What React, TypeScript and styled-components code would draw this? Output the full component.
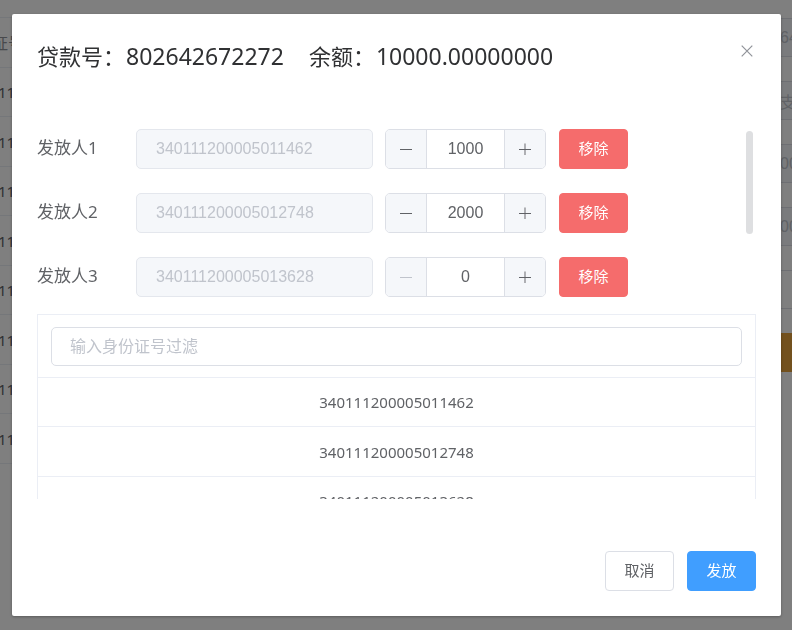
import React, { useState } from 'react';
import styled, { createGlobalStyle } from 'styled-components';

const sans = '"Noto Sans", "Noto Sans CJK SC", sans-serif';
const latin = '"Liberation Sans", "Noto Sans CJK SC", sans-serif';

const GlobalStyle = createGlobalStyle`
  * { box-sizing: border-box; }
  body { margin: 0; background: #fff; font-family: ${sans}; color: #606266; }
  button, input { font-family: inherit; margin: 0; }
`;

const Page = styled.div`
  display: flex;
  justify-content: space-between;
  height: 100vh;
  overflow: hidden;
`;

const BackTable = styled.table`
  margin-top: 17px;
  width: 12px;
  height: min-content;
  border-collapse: collapse;
  table-layout: fixed;
  border-top: 1px solid #ebeef5;
  line-height: 24px;
`;

const BackHead = styled.th`
  height: 50px;
  padding: 0;
  border-bottom: 1px solid #ebeef5;
  color: #909399;
  font-size: 16px;
  font-weight: 400;
  text-align: left;
  text-indent: -8px;
  white-space: nowrap;
  overflow: hidden;
`;

const BackCell = styled.td`
  height: 49px;
  padding: 0;
  border-bottom: 1px solid #ebeef5;
  font-size: 15px;
  text-indent: -2px;
  white-space: nowrap;
  overflow: hidden;

  tr:nth-child(even) > & { height: 50px; }
`;

const BackForm = styled.div`
  display: flex;
  flex-direction: column;
  gap: 24px;
  width: 12px;
  padding-top: 18px;
`;

const BackInput = styled.input`
  width: 100%;
  height: 39px;
  padding: 0;
  border: solid #dcdfe6;
  border-width: 1px 0;
  background: #f5f7fa;
  color: #c0c4cc;
  font-family: ${latin};
  font-size: 16px;

  &:enabled { background: #fff; }
`;

const BackButton = styled.button`
  height: 39px;
  border: 0;
  padding: 0;
  background: #e6a23c;
`;

const Overlay = styled.div`
  position: fixed;
  inset: 0;
  overflow: auto;
  padding: 14px 11px 14px 12px;
  background: rgba(0, 0, 0, 0.5);
`;

const Dialog = styled.section`
  padding: 25px;
  border-radius: 2px;
  background: #fff;
  box-shadow: 0 1px 3px rgba(0, 0, 0, 0.3);
`;

const Header = styled.header`
  display: flex;
  justify-content: space-between;
  align-items: flex-start;
  min-height: 36px;
  margin-bottom: 54px;
`;

const Title = styled.h1`
  display: flex;
  align-items: baseline;
  flex-wrap: wrap;
  column-gap: 25px;
  margin: 0;
  color: #303133;
  font-size: 22px;
  font-weight: 400;
  line-height: 34px;
`;

const Figure = styled.span`
  margin-left: 1px;
  font-size: 23px;
`;

const CloseButton = styled.button`
  display: flex;
  margin-top: 3px;
  padding: 3px;
  border: 0;
  background: none;
  color: #909399;
  cursor: pointer;
`;

const PayeeArea = styled.div`
  display: flex;
  justify-content: space-between;
  padding-right: 3px;
  margin-bottom: 17px;
`;

const PayeeList = styled.div`
  display: grid;
  gap: 24px;
`;

const ScrollThumb = styled.div`
  width: 7px;
  height: 103px;
  margin-top: 2px;
  border-radius: 4px;
  background: #dedfe1;
`;

const PayeeRow = styled.div`
  display: flex;
  align-items: center;
`;

const PayeeLabel = styled.label`
  width: 99px;
  padding-bottom: 2px;
  font-size: 17px;
  line-height: 24px;
`;

const PayeeInput = styled.input`
  width: 237px;
  height: 40px;
  margin-right: 12px;
  padding: 0 19px;
  border: 1px solid #e4e7ed;
  border-radius: 5px;
  background: #f5f7fa;
  color: #c0c4cc;
  font-family: ${latin};
  font-size: 16px;
`;

const Stepper = styled.div`
  display: flex;
  width: 161px;
  height: 40px;
  margin-right: 13px;
  border: 1px solid #dcdfe6;
  border-radius: 5px;
  overflow: hidden;
`;

const StepButton = styled.button`
  display: flex;
  align-items: center;
  justify-content: center;
  width: 40px;
  padding: 0;
  border: 0;
  background: #f5f7fa;
  color: #606266;
  cursor: pointer;

  &:disabled { color: #c0c4cc; cursor: not-allowed; }
`;

const StepValue = styled.input`
  flex: 1;
  min-width: 0;
  padding: 0;
  border: solid #dcdfe6;
  border-width: 0 1px;
  color: #606266;
  font-family: ${latin};
  font-size: 16px;
  text-align: center;
  outline: 0;
`;

const tones = {
  plain: { face: '#fff', edge: '#dcdfe6', ink: '#606266' },
  primary: { face: '#409eff', edge: '#409eff', ink: '#fff' },
  danger: { face: '#f56c6c', edge: '#f56c6c', ink: '#fff' },
};

const Button = styled.button<{ $tone: keyof typeof tones }>`
  width: 69px;
  height: 40px;
  padding: 0 0 2px;
  border: 1px solid ${p => tones[p.$tone].edge};
  border-radius: 4px;
  background: ${p => tones[p.$tone].face};
  color: ${p => tones[p.$tone].ink};
  font-size: 15px;
  line-height: 20px;
  cursor: pointer;
`;

const TableViewport = styled.div`
  height: 185px;
  overflow: auto;
  scrollbar-width: none;
`;

const IdTable = styled.table`
  width: 100%;
  border: 1px solid #ebeef5;
  border-spacing: 0;
`;

const FilterCell = styled.th`
  padding: 12px 13px 11px;
  border-bottom: 1px solid #ebeef5;
`;

const FilterInput = styled.input`
  display: block;
  width: 100%;
  height: 39px;
  padding: 0 18px 2px;
  border: 1px solid #dcdfe6;
  border-radius: 5px;
  color: #606266;
  font-size: 16px;

  &::placeholder { color: #c0c4cc; opacity: 1; }
`;

const IdCell = styled.td`
  height: 49px;
  padding: 0;
  border-bottom: 1px solid #ebeef5;
  font-size: 15px;
  line-height: 24px;
  text-align: center;

  tr:nth-child(even) > & { height: 50px; }
`;

const Footer = styled.footer`
  display: flex;
  justify-content: flex-end;
  gap: 13px;
  margin-top: 52px;
`;

const CloseIcon = () => (
  <svg width="12" height="12" viewBox="0 0 12 12" fill="none" stroke="currentColor" strokeWidth="1.2">
    <path d="M0.7 0.7 11.3 11.3M11.3 0.7 0.7 11.3" />
  </svg>
);

const StepIcon = ({ plus = false }: { plus?: boolean }) => (
  <svg width="12" height="12" viewBox="0 0 12 12" fill="none" stroke="currentColor">
    <path d="M0 6.5h12" />
    {plus && <path d="M6 0.5v12" strokeWidth="1.2" opacity="0.8" />}
  </svg>
);

const ids = ['340111200005011462', '340111200005012748', '340111200005013628'];

export default function App() {
  const [payees, setPayees] = useState(
    ids.map((id, i) => ({ id, amount: [1000, 2000, 0][i] })),
  );
  const [filter, setFilter] = useState('');

  const setAmount = (id: string, amount: number) =>
    setPayees(list => list.map(p => (p.id === id ? { ...p, amount: Math.max(0, amount || 0) } : p)));

  return (
    <>
      <GlobalStyle />
      <Page aria-hidden="true">
        <BackTable>
          <thead>
            <tr><BackHead>证号</BackHead></tr>
          </thead>
          <tbody>
            {Array.from({ length: 8 }, (_, i) => (
              <tr key={i}><BackCell>11</BackCell></tr>
            ))}
          </tbody>
        </BackTable>
        <BackForm>
          {['64', '支', '00', '00'].map((value, i) => (
            <BackInput key={i} value={value} disabled />
          ))}
          <BackInput tabIndex={-1} />
          <BackButton tabIndex={-1} />
        </BackForm>
      </Page>
      <Overlay>
        <Dialog role="dialog" aria-modal="true" aria-labelledby="dialog-title">
          <Header>
            <Title id="dialog-title">
              <span>贷款号：<Figure>802642672272</Figure></span>
              <span>余额：<Figure>10000.00000000</Figure></span>
            </Title>
            <CloseButton type="button" aria-label="关闭"><CloseIcon /></CloseButton>
          </Header>
          <PayeeArea>
            <PayeeList>
              {payees.map((p, i) => (
                <PayeeRow key={p.id}>
                  <PayeeLabel htmlFor={`payee-${p.id}`}>发放人{i + 1}</PayeeLabel>
                  <PayeeInput id={`payee-${p.id}`} value={p.id} disabled />
                  <Stepper>
                    <StepButton
                      type="button"
                      aria-label="减少"
                      disabled={p.amount === 0}
                      onClick={() => setAmount(p.id, p.amount - 1)}
                    >
                      <StepIcon />
                    </StepButton>
                    <StepValue
                      aria-label="金额"
                      inputMode="numeric"
                      value={p.amount}
                      onChange={e => setAmount(p.id, Number(e.target.value))}
                    />
                    <StepButton type="button" aria-label="增加" onClick={() => setAmount(p.id, p.amount + 1)}>
                      <StepIcon plus />
                    </StepButton>
                  </Stepper>
                  <Button
                    type="button"
                    $tone="danger"
                    onClick={() => setPayees(list => list.filter(x => x.id !== p.id))}
                  >
                    移除
                  </Button>
                </PayeeRow>
              ))}
            </PayeeList>
            <ScrollThumb />
          </PayeeArea>
          <TableViewport>
            <IdTable>
              <thead>
                <tr>
                  <FilterCell>
                    <FilterInput
                      aria-label="输入身份证号过滤"
                      placeholder="输入身份证号过滤"
                      value={filter}
                      onChange={e => setFilter(e.target.value)}
                    />
                  </FilterCell>
                </tr>
              </thead>
              <tbody>
                {ids.filter(id => id.includes(filter)).map(id => (
                  <tr key={id}><IdCell>{id}</IdCell></tr>
                ))}
              </tbody>
            </IdTable>
          </TableViewport>
          <Footer>
            <Button type="button" $tone="plain">取消</Button>
            <Button type="button" $tone="primary">发放</Button>
          </Footer>
        </Dialog>
      </Overlay>
    </>
  );
}
